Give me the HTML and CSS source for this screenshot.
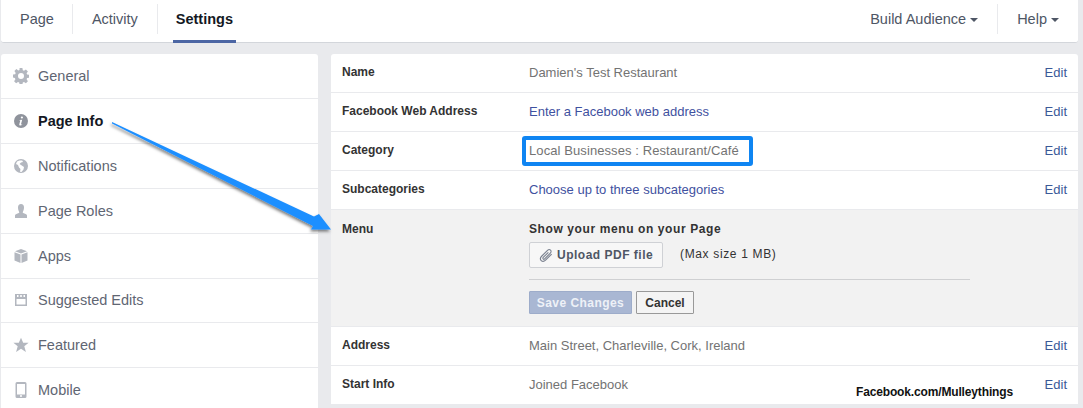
FILE: index.html
```html
<!DOCTYPE html>
<html lang="en">
  <head>
    <meta charset="utf-8" />
    <title>Page Settings</title>
    <link rel="stylesheet" href="styles.css">
  </head>
  <body>
    <div class="topbar">
      <div class="tabs">
        <a class="tab">Page</a>
        <span class="sep"></span>
        <a class="tab activity">Activity</a>
        <span class="sep"></span>
        <a class="tab active">Settings</a>
      </div>
      <div class="tabs">
        <a class="tab">Build Audience <i class="caret"></i></a>
        <span class="sep"></span>
        <a class="tab">Help <i class="caret"></i></a>
      </div>
    </div>

    <div class="content">
      <ul class="sidebar">
        <li>
          <svg class="icon" viewBox="0 0 16 16"><path fill-rule="evenodd" d="M6.600 0h2.800l.4 2.200 1.200.5L12.900 1.400l2 2-1.300 1.900.5 1.200 2.200.4v2.800l-2.200.4-.5 1.200 1.300 1.900-2 2-1.900-1.300-1.200.5-.4 2.200H6.600l-.4-2.200-1.200-.5-1.900 1.300-2-2 1.300-1.900-.5-1.200L0 9.400V6.600l2.200-.4.5-1.200-1.300-1.900 2-2 1.900 1.300 1.200-.5zM8 5a3 3 0 1 0 0 6 3 3 0 0 0 0-6z"/></svg>
          General
        </li>
        <li class="current">
          <svg class="icon" viewBox="0 0 16 16"><path fill-rule="evenodd" d="M8 1a7 7 0 1 1 0 14A7 7 0 0 1 8 1zm.9 2.400a1.100 1.100 0 1 0 0 2.200 1.100 1.100 0 0 0 0-2.200zM6.500 6.900l-.1.600h.9l-1 3.800c-.2.900.3 1.300 1 1.300.8 0 1.500-.4 2-1l-.3-.4c-.3.300-.6.400-.8.400s-.3-.1-.2-.4l1.200-4.500z"/></svg>
          Page Info
        </li>
        <li>
          <svg class="icon" viewBox="0 0 16 16"><path fill-rule="evenodd" d="M8 1a7 7 0 1 1 0 14A7 7 0 0 1 8 1zM6.500 2.400 4 3.500 3 6l2 1 1 2.500L7.500 11l-.5 2.800 1.500.2 2-2.500.5-2.500L8 7 6.500 6 8 4.500l2-.5-.8-1.500z"/></svg>
          Notifications
        </li>
        <li>
          <svg class="icon" viewBox="0 0 16 16"><path d="M8 1c2 0 3 1.500 3 3.500S10.200 8 9.800 9c-.2.600.2 1 1 1.300 1.800.6 3.200 1 3.200 2.200V15H2v-2.500c0-1.200 1.400-1.600 3.200-2.200.8-.3 1.200-.7 1-1.300C5.800 8 5 6.500 5 4.500S6 1 8 1z"/></svg>
          Page Roles
        </li>
        <li>
          <svg class="icon" viewBox="0 0 16 16"><path d="M8 1l6 2.200L8 5.600 2 3.200zM1.500 4.200l6 2.400V15l-6-2.400zM14.500 4.200v8.400l-6 2.400V6.600z"/></svg>
          Apps
        </li>
        <li class="short">
          <svg class="icon" viewBox="0 0 16 16"><path fill-rule="evenodd" d="M2 2h12v12H2zM3.500 7v5.500h9V7zM4 3v2h1.500V3zm3.200 0v2h1.600V3zm3.300 0v2H12V3z"/></svg>
          Suggested Edits
        </li>
        <li>
          <svg class="icon" viewBox="0 0 16 16"><path d="M8 .8l2.200 5h5.400l-4.300 3.500 1.600 5.600L8 11.700l-4.900 3.200 1.600-5.600L.4 5.800h5.400z"/></svg>
          Featured
        </li>
        <li>
          <svg class="icon" viewBox="0 0 16 16"><path fill-rule="evenodd" d="M4 0h8a1.500 1.500 0 0 1 1.500 1.500v13A1.500 1.500 0 0 1 12 16H4a1.500 1.500 0 0 1-1.500-1.500v-13A1.500 1.500 0 0 1 4 0zm0 2v10.500h8V2zm4 11a1 1 0 1 0 0 2 1 1 0 0 0 0-2z"/></svg>
          Mobile
        </li>
      </ul>

      <div class="panel">
        <div class="row">
          <div class="label">Name</div>
          <div class="value">Damien's Test Restaurant</div>
          <a class="edit">Edit</a>
        </div>
        <div class="row">
          <div class="label">Facebook Web Address</div>
          <div class="value"><a class="link">Enter a Facebook web address</a></div>
          <a class="edit">Edit</a>
        </div>
        <div class="row">
          <div class="label">Category</div>
          <div class="value"><span class="highlight">Local Businesses : Restaurant/Café</span></div>
          <a class="edit">Edit</a>
        </div>
        <div class="row">
          <div class="label">Subcategories</div>
          <div class="value"><a class="link">Choose up to three subcategories</a></div>
          <a class="edit">Edit</a>
        </div>
        <div class="row open">
          <div class="label">Menu</div>
          <div class="editor">
            <div class="editor-title">Show your menu on your Page</div>
            <div class="upload-line">
              <button class="upload">
                <svg class="clip" viewBox="0 0 16 16"><path d="M13.500 6.500 7 13c-1.500 1.500-3.500 1.500-4.600.4S1.300 10.300 2.800 8.800l6.300-6.300c1-1 2.400-1 3.200-.2s.8 2.200-.2 3.200L6 11.600c-.5.500-1.200.5-1.600.1s-.4-1.100.1-1.600L10 4.600"/></svg>
                Upload PDF file
              </button>
              <span class="max-size">(Max size 1 MB)</span>
            </div>
            <div class="rule"></div>
            <div class="actions">
              <button class="save">Save Changes</button>
              <button class="cancel">Cancel</button>
            </div>
          </div>
        </div>
        <div class="row">
          <div class="label">Address</div>
          <div class="value">Main Street, Charleville, Cork, Ireland</div>
          <a class="edit">Edit</a>
        </div>
        <div class="row">
          <div class="label">Start Info</div>
          <div class="value">Joined Facebook</div>
          <a class="edit">Edit</a>
        </div>
      </div>
    </div>

    <!-- annotations drawn on top of the screenshot -->
    <svg class="arrow" viewBox="0 0 1083 408">
      <defs>
        <filter id="drop" x="-10%" y="-10%" width="120%" height="130%">
          <feDropShadow dx="-1" dy="2" stdDeviation="1.500" flood-color="#000" flood-opacity="0.5"/>
        </filter>
      </defs>
      <path filter="url(#drop)" fill="#1e8fff" d="M112 122 314 216.500 319 214 331 229.500 311 229.500 313 226 308 223.500 112 123.500z"/>
    </svg>
    <div class="credit">Facebook.com/Mulleythings</div>
  </body>
</html>
```

FILE: styles.css
```css
html,
body {
  height: 408px;
  padding: 0;
  margin: 0;
  overflow: hidden;
  background-color: #e9eaed;
}
body {
  position: relative;
  color: #4e5665;
  font: 14.500px/18px "Liberation Sans", Arial, sans-serif;
}
a {
  cursor: pointer;
}
.topbar {
  display: flex;
  justify-content: space-between;
  height: 42px;
  margin: 0 5px 0 1px;
  background: #fff;
  border-bottom: 1px solid #d3d6db;
  border-radius: 0 0 3px 3px;
}
.tabs {
  display: flex;
  align-items: flex-start;
}
.tab {
  height: 39px;
  padding: 0 19px;
  line-height: 38px;
  color: #4e5665;
}
.tabs:first-child .tab {
  padding-right: 18px;
}
.tabs:first-child .tab.activity {
  padding-right: 19px;
}
.tabs:first-child .tab.active {
  height: 40px;
  margin-left: 15px;
  padding: 0 3px;
  font-weight: bold;
  color: #141823;
  border-bottom: 3px solid #4c66a4;
}
.sep {
  width: 1px;
  height: 30px;
  margin-top: 4px;
  background: #e9eaed;
}
.caret {
  display: inline-block;
  vertical-align: 2px;
  border-top: 4px solid #4e5665;
  border-left: 4.500px solid transparent;
  border-right: 4.500px solid transparent;
}
.content {
  display: flex;
  align-items: flex-start;
  gap: 13px;
  margin: 11px 5px 0 1px;
}
.sidebar {
  width: 317px;
  flex: none;
  margin: 0;
  padding: 0;
  list-style: none;
  background: #fff;
  border-radius: 3px 3px 0 0;
}
.sidebar li {
  display: flex;
  align-items: center;
  gap: 9px;
  height: 44px;
  padding-left: 12px;
  border-bottom: 1px solid #e9eaed;
  color: #5f6673;
}
.sidebar li.short {
  height: 42px;
  padding-bottom: 1px;
}
.sidebar li.current {
  font-weight: bold;
  color: #141823;
}
.icon {
  width: 16px;
  height: 16px;
  flex: none;
  fill: #b3b7bf;
}
.current .icon {
  fill: #8f939c;
}
.panel {
  flex: 1;
  font-size: 13px;
  background: #fff;
  border-radius: 3px 3px 0 0;
}
.row {
  display: flex;
  height: 38px;
  border-bottom: 1px solid #e9eaed;
  line-height: 36px;
}
.label {
  width: 187px;
  flex: none;
  padding-left: 11px;
  font-size: 12px;
  font-weight: bold;
  color: #333;
}
.value {
  flex: 1;
  padding-top: 1px;
  color: #737373;
}
.link {
  color: #3f51a0;
}
.edit {
  padding: 1px 11px 0 0;
  color: #3b5998;
}
.highlight {
  display: inline-block;
  height: 22px;
  margin: 3px 0 0 -7px;
  padding: 0 10px 0 3px;
  line-height: 21px;
  letter-spacing: 0.09px;
  border: 4px solid #0f85f2;
  border-radius: 3px;
  vertical-align: top;
}
.row.open {
  height: 116px;
  background: #f2f2f2;
  line-height: 16px;
}
.open .label {
  padding-top: 11px;
}
.editor {
  flex: 1;
  padding-top: 11px;
  font-size: 12px;
}
.editor-title {
  font-weight: bold;
  letter-spacing: 0.6px;
  color: #333;
}
.upload-line {
  display: flex;
  align-items: center;
  gap: 17px;
  margin-top: 5px;
}
.upload {
  display: flex;
  align-items: center;
  gap: 3px;
  width: 134px;
  height: 26px;
  padding: 0 0 0 9px;
  font: bold 12px "Liberation Sans", Arial, sans-serif;
  letter-spacing: 0.5px;
  color: #4e5665;
  background: #f7f7f7;
  border: 1px solid #cfd1d5;
  border-radius: 2px;
}
.clip {
  width: 15px;
  height: 15px;
  fill: none;
  stroke: #7b8290;
  stroke-width: 1.200;
}
.max-size {
  margin-top: -2px;
  letter-spacing: 0.65px;
  color: #333;
}
.rule {
  width: 441px;
  height: 1px;
  margin-top: 11px;
  background: #cfd0d2;
}
.actions {
  display: flex;
  gap: 4px;
  margin-top: 11px;
}
.save,
.cancel {
  height: 23px;
  padding: 0;
  font: bold 12px "Liberation Sans", Arial, sans-serif;
  border-radius: 1px;
}
.save {
  width: 103px;
  letter-spacing: 0.45px;
  color: #eef1f7;
  background: #a9b7d3;
  border: 1px solid #9dacca;
}
.cancel {
  width: 58px;
  color: #333;
  background: #f4f4f4;
  border: 1px solid #999;
}
.arrow {
  position: absolute;
  left: 0;
  top: 0;
  width: 1083px;
  height: 408px;
  pointer-events: none;
}
.credit {
  position: absolute;
  left: 856px;
  top: 384px;
  font-size: 12px;
  line-height: 16px;
  letter-spacing: -0.15px;
  font-weight: bold;
  color: #111;
}
```
